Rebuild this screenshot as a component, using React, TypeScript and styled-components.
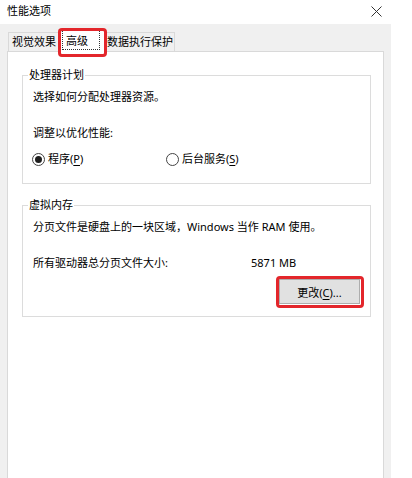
import React from "react";
import styled, { createGlobalStyle, css } from "styled-components";

const Global = createGlobalStyle`
  html, body { margin: 0; padding: 0; background: #ffffff; }
  body {
    font-family: "Noto Sans", "Noto Sans CJK SC", sans-serif;
    font-size: 11px;
    color: #000000;
  }
  * { box-sizing: border-box; }
`;

const Window = styled.div`
  width: 412px;
  height: 478px;
  display: flex;
  flex-direction: column;
  background: #ffffff;
  overflow: hidden;
`;

const TitleBar = styled.div`
  height: 24px;
  flex: 0 0 24px;
  display: flex;
  align-items: center;
  justify-content: space-between;
  padding: 0 30px 2px 7px;
`;

const Title = styled.span`
  font-size: 11px;
  line-height: 14px;
`;

const Body = styled.div`
  width: 391px;
  flex: 1;
  display: flex;
  flex-direction: column;
  background: #f0f0f0;
  padding: 5px 7px 0 7px;
`;

const TabStrip = styled.div`
  height: 22px;
  display: flex;
  align-items: flex-end;
  padding-left: 1px;
`;

const highlightBox = css`
  &::after {
    content: "";
    position: absolute;
    border: 3px solid #e3262b;
    border-radius: 4px;
    pointer-events: none;
  }
`;

const Tab = styled.div<{ $active?: boolean; $highlight?: boolean; $tight?: boolean }>`
  position: relative;
  display: flex;
  align-items: flex-start;
  border: 1px solid #d9d9d9;
  border-bottom: none;
  background: #f0f0f0;
  height: 19px;
  line-height: 17px;
  padding: ${(p) => (p.$tight ? "0 1px 0 2px" : "0 3px")};
  white-space: nowrap;
  ${(p) =>
    p.$active &&
    css`
      z-index: 1;
      background: #ffffff;
      height: 23px;
      margin: 0 -2px -1px -2px;
      padding: 0 5px 0 3px;
      line-height: 16px;
    `}
  ${(p) =>
    p.$highlight &&
    css`
      ${highlightBox}
      &::after {
        inset: -2px -2px -5px -1px;
      }
    `}
`;

const FocusRing = styled.span`
  border: 1px dotted #333333;
  padding: 2px 11px 0 3px;
  height: 20px;
`;

const Panel = styled.div`
  flex: 1;
  background: #ffffff;
  border: 1px solid #d9d9d9;
  border-bottom: none;
  padding: 0 12px 0 14px;
  display: flex;
  flex-direction: column;
`;

const GroupBox = styled.div<{ $top: number }>`
  margin-top: ${(p) => p.$top}px;
  border: 1px solid #dcdcdc;
  display: flex;
  flex-direction: column;
  padding: 0 10px 0 10px;
`;

const GroupTitle = styled.span`
  align-self: flex-start;
  margin: -8px 0 0 -5px;
  padding: 0 1px;
  background: #ffffff;
  line-height: 14px;
`;

const Line = styled.div<{ $gap: number }>`
  margin-top: ${(p) => p.$gap}px;
  line-height: 16px;
  white-space: nowrap;
`;

const RadioRow = styled.div`
  margin-top: 10px;
  margin-bottom: 16px;
  display: grid;
  grid-template-columns: 134px auto;
  align-items: center;
  line-height: 16px;
`;

const RadioLabel = styled.label`
  display: flex;
  align-items: center;
  gap: 3px;
  margin-left: -1px;
`;

const RadioCircle = styled.span<{ $checked?: boolean }>`
  width: 13px;
  height: 13px;
  border-radius: 50%;
  border: 1px solid #444444;
  background: #ffffff;
  display: flex;
  align-items: center;
  justify-content: center;
  &::before {
    content: "";
    width: 7px;
    height: 7px;
    border-radius: 50%;
    background: ${(p) => (p.$checked ? "#1f1f1f" : "transparent")};
  }
`;

const Key = styled.span`
  text-decoration: underline;
  text-underline-offset: 2px;
`;

const SizeRow = styled.div`
  margin-top: 20px;
  display: grid;
  grid-template-columns: 218px auto;
  line-height: 16px;
`;

const ButtonRow = styled.div`
  margin-top: 8px;
  margin-bottom: 12px;
  display: flex;
  justify-content: flex-end;
`;

const Button = styled.button<{ $highlight?: boolean }>`
  position: relative;
  width: 81px;
  height: 25px;
  background: #e1e1e1;
  border: 1px solid #adadad;
  border-radius: 0;
  font-family: inherit;
  font-size: 11px;
  color: #000000;
  padding: 0;
  ${(p) =>
    p.$highlight &&
    css`
      ${highlightBox}
      &::after {
        inset: -4px -5px -5px -4px;
      }
    `}
`;

const CloseIcon = () => (
  <svg width="11" height="11" viewBox="0 0 11 11">
    <path d="M0.5 0.5 L10.5 10.5 M10.5 0.5 L0.5 10.5" stroke="#333" strokeWidth="1" fill="none" />
  </svg>
);

export default function App() {
  return (
    <>
      <Global />
      <Window>
        <TitleBar>
          <Title>性能选项</Title>
          <CloseIcon />
        </TitleBar>
        <Body>
          <TabStrip>
            <Tab>视觉效果</Tab>
            <Tab $active $highlight>
              <FocusRing>高级</FocusRing>
            </Tab>
            <Tab $tight>数据执行保护</Tab>
          </TabStrip>
          <Panel>
            <GroupBox $top={23}>
              <GroupTitle>处理器计划</GroupTitle>
              <Line $gap={7}>选择如何分配处理器资源。</Line>
              <Line $gap={20}>调整以优化性能:</Line>
              <RadioRow>
                <RadioLabel>
                  <RadioCircle $checked />
                  <span>
                    程序(<Key>P</Key>)
                  </span>
                </RadioLabel>
                <RadioLabel>
                  <RadioCircle />
                  <span>
                    后台服务(<Key>S</Key>)
                  </span>
                </RadioLabel>
              </RadioRow>
            </GroupBox>
            <GroupBox $top={21}>
              <GroupTitle>虚拟内存</GroupTitle>
              <Line $gap={7}>分页文件是硬盘上的一块区域，Windows 当作 RAM 使用。</Line>
              <SizeRow>
                <span>所有驱动器总分页文件大小:</span>
                <span>5871 MB</span>
              </SizeRow>
              <ButtonRow>
                <Button $highlight>
                  更改(<Key>C</Key>)...
                </Button>
              </ButtonRow>
            </GroupBox>
          </Panel>
        </Body>
      </Window>
    </>
  );
}
